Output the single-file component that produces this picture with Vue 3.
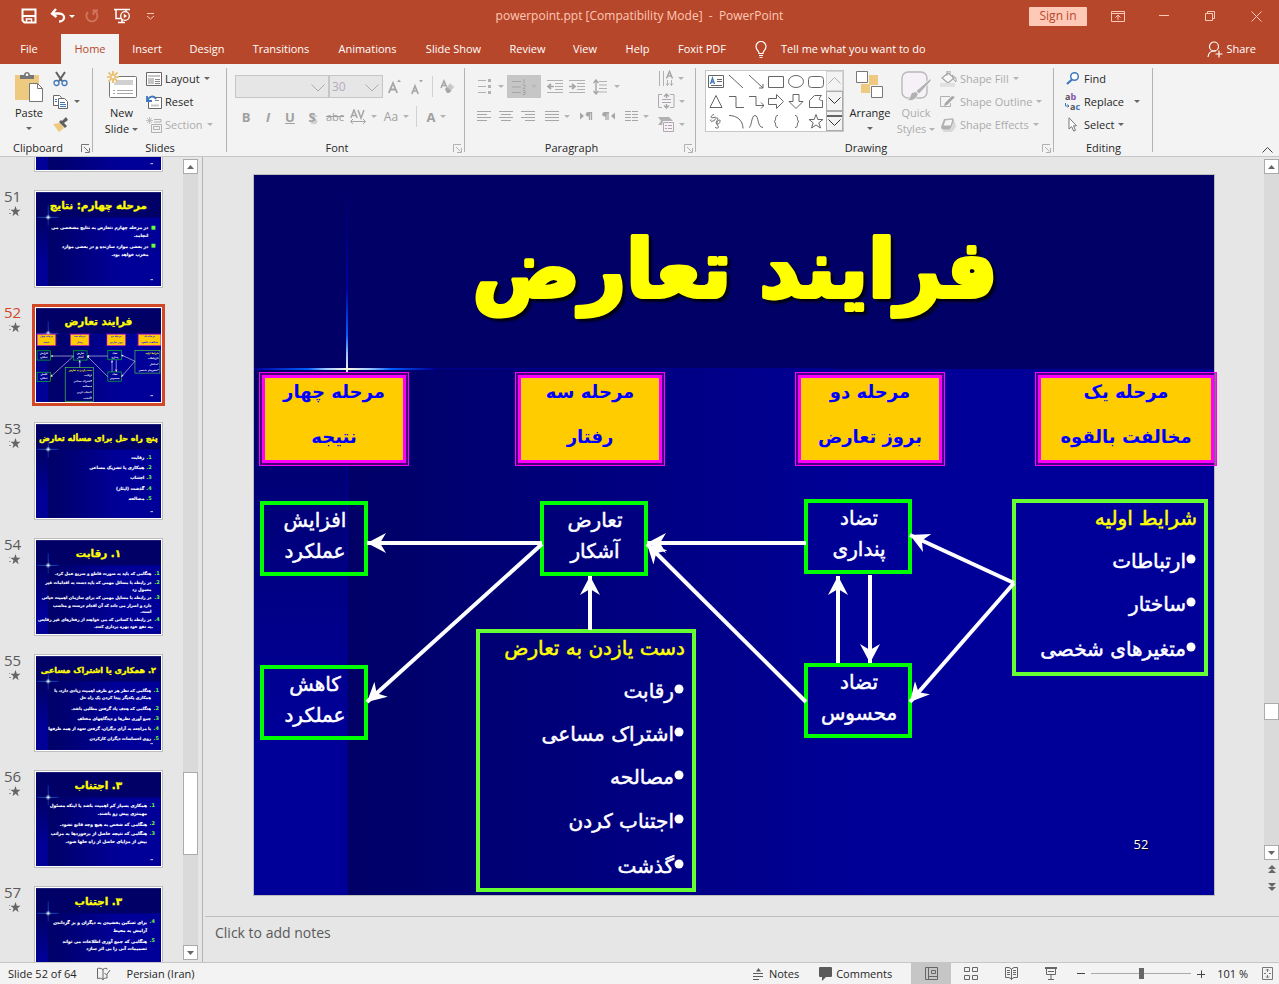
<script setup>
import { h, ref } from 'vue'

const ICONS = {
  save: [16, 16, '<path d="M1.500 1.500h13v13h-11l-2-2z" fill="none" stroke="#fff" stroke-width="2"/><path d="M2 8h12" stroke="#fff" stroke-width="2"/><path d="M5.500 15v-4h5v4" fill="none" stroke="#fff" stroke-width="1.500"/>'],
  undo: [16, 16, '<path d="M6 1 2 5.500 6.500 9M2.500 5.500H9c7 0 6.500 8 0 8" fill="none" stroke="#fff" stroke-width="2.300"/>'],
  redo: [16, 16, '<path d="M4 4a5.500 5.500 0 1 0 5-1.500M9.500 7V2.500H14" fill="none" stroke="#d0765f" stroke-width="1.800"/>'],
  present: [18, 16, '<path d="M1 1.500h16M3 2v8.500h5M9 11v3M5 14.500h7M13 2v2" fill="none" stroke="#fff" stroke-width="1.500"/><circle cx="12" cy="8" r="4.300" fill="#b7472a" stroke="#fff" stroke-width="1.300"/><path d="m10.800 5.800 3.200 2.200-3.200 2.200z" fill="#fff"/>'],
  customize: [9, 8, '<path d="M1 1.500h7" stroke="#ffc9b8"/><path d="m1 4 3.500 3L8 4" fill="none" stroke="#ffc9b8"/>'],
  ribbonopt: [14, 11, '<path d="M.500.500h13v10H.500zM.500 2.500h13M7 9V4.500M4.500 6.500 7 4l2.500 2.500" fill="none" stroke="#ffc9b8"/>'],
  min: [11, 11, '<path d="M0 4.500h10" stroke="#ffc9b8"/>'],
  max: [11, 11, '<path d="M.500 2.500h7v7H.500zM2.500 2.500v-2h7v7h-2" fill="none" stroke="#ffc9b8"/>'],
  close: [11, 11, '<path d="m.500.500 10 10m0-10-10 10" stroke="#ffc9b8"/>'],
  bulb: [12, 17, '<path d="M4 12.500C4 9.500 1 9 1 5.500a5 5 0 0 1 10 0C11 9 8 9.500 8 12.500zM4 14.500h4M4.500 16.500h3" fill="none" stroke="#fff" stroke-width="1.200"/>'],
  share: [16, 17, '<circle cx="7" cy="5.500" r="4.500" fill="none" stroke="#fff" stroke-width="1.200"/><path d="M1 16c.500-4 2-6 6-6h2M12 9.500v7M8.500 13h7" fill="none" stroke="#fff" stroke-width="1.200"/>'],
  paste: [30, 32, '<path d="M1 4h24v25H1z" fill="#eec980"/><path d="M6 8V4h4c0-4 6-4 6 0h4v4z" fill="#777"/><circle cx="13" cy="3.800" r="1.300" fill="#fff"/><path d="M15.500 12.500h8l5 5v13h-13z" fill="#fff" stroke="#777"/><path d="M23.500 12.500v5h5" fill="none" stroke="#777"/>'],
  cut: [15, 16, '<path d="m3 1 6 9M12 1 6 10" stroke="#5f5f5f" stroke-width="2"/><circle cx="3.500" cy="12" r="2.500" fill="none" stroke="#3f78bd" stroke-width="1.300"/><circle cx="11.500" cy="12" r="2.500" fill="none" stroke="#3f78bd" stroke-width="1.300"/>'],
  copy: [15, 14, '<path d="M.500.500h6l2 2v8h-8z" fill="#fff" stroke="#666"/><path d="M5.500 3.500h6l3 3v7h-9z" fill="#fff" stroke="#666"/><path d="M2 4.500h2M2 6.500h2M7 7.500h5M7 9.500h6M7 11.500h6" stroke="#3f78bd"/>'],
  painter: [16, 15, '<path d="m0 7 7-1 4 5-5 4z" fill="#eec980"/><path d="m6 5 6 6 2-2-3-3 4-3-2-3-4 4-1-1z" fill="#5f5f5f"/>'],
  newslide: [31, 28, '<rect x="3.500" y="5.500" width="27" height="21" rx="1" fill="#fff" stroke="#777"/><path d="M8 9h19v5H8z" fill="#d0d0d0"/><path d="M7 19.500h2m2 0h16M7 22.500h2m2 0h16" stroke="#a6a6a6"/><circle cx="7" cy="6" r="6" fill="#f3f3f3"/><path d="M7 0v12M1 6h12M2.500 1.500l9 9m0-9-9 9" stroke="#eab95d" stroke-width="1.700"/><circle cx="7" cy="6" r="2" fill="#fff" stroke="#eab95d"/>'],
  layout: [16, 14, '<path d="M.500.500h15v13H.500z" fill="#fff" stroke="#666"/><path d="M2 3h12v2H2zM2 6h6v6H2z" fill="#c6c6c6"/><path d="M9 7.500h5M9 9.500h5M9 11.500h5" stroke="#888"/>'],
  reset: [16, 14, '<path d="M8 2.500h7.500v11h-13V7" fill="#fff" stroke="#666"/><path d="M5 9.500h8v2H5z" fill="#c6c6c6"/><path d="M9 5.500h4" stroke="#888"/><path d="M1 1v5h5M1.500 5.500C3 1 8 0 10 4" fill="none" stroke="#3f78bd" stroke-width="1.800"/>'],
  section: [16, 16, '<path d="M8 2.500h7v2.500H8" fill="none" stroke="#b1b1b1"/><path d="M5.500 7.500h10v8h-10z" fill="none" stroke="#b1b1b1"/><path d="M7.500 9.500h6v3h-6z" fill="none" stroke="#b1b1b1"/><path d="M3.500 0v7M0 3.500h7M1 1l5 5m0-5-5 5" stroke="#c0c0c0"/>'],
  launch: [9, 9, '<path d="M8 .500H.500V8M3 3l4.500 4.500M8.500 4v4.500H4" fill="none" stroke="#777"/>'],
  launchoff: [9, 9, '<path d="M8 .500H.500V8M3 3l4.500 4.500M8.500 4v4.500H4" fill="none" stroke="#b1b1b1"/>'],
  chev: [14, 8, '<path d="m.500.500 6.500 6.500 6.500-6.500" fill="none" stroke="#ababab"/>'],
  grow: [14, 16, '<path d="m.800 14 4.200-10 4.200 10M2.500 10.500h5" fill="none" stroke="#a6a6a6" stroke-width="1.800"/><path d="m9 3 2-2.500L13 3z" fill="#a6a6a6"/>'],
  shrink: [13, 16, '<path d="m.800 15 3.200-8 3.200 8M2 12h4" fill="none" stroke="#a6a6a6" stroke-width="1.700"/><path d="m8 1 2 2.500L12 1z" fill="#a6a6a6"/>'],
  eraser: [15, 15, '<path d="m1 9 3-7 3 7M2 6.500h4" fill="none" stroke="#a6a6a6" stroke-width="1.600"/><path d="m5 10 5-6 4.500 4L9 14H7z" fill="#c8c8c8" stroke="#f3f3f3" stroke-width=".6"/><path d="m5 10 2-2 4.500 4L9 14H7z" fill="#a6a6a6"/>'],
  av: [16, 15, '<path d="m.800 9 3.200-8 3.200 8M2 6.500h4M8 1l3 8 3-8" fill="none" stroke="#a6a6a6" stroke-width="1.500"/><path d="M1 12.500h14M3 10 .500 12.500 3 15M13 10l2.500 2.500L13 15" fill="none" stroke="#a6a6a6"/>'],
  bullets: [14, 15, '<path d="M0 1.500h8M0 7.500h8M0 13.500h8" stroke="#b1b1b1"/><path d="M10 0h3v3h-3zM10 6h3v3h-3zM10 12h3v3h-3z" fill="#b1b1b1"/>'],
  numbers: [16, 16, '<path d="M0 2.500h9M0 8h9M0 13.500h9" stroke="#a6a6a6"/><path d="M12 .500v4M11 1h1M10.500 6h2.500v1.500L11 9.500h2.500M10.500 11.500H13v4h-2.500M11 13.500h2" fill="none" stroke="#a6a6a6"/>'],
  dedent: [17, 13, '<path d="M0 .500h16M8 3.500h8M8 6.500h8M8 9.500h8M0 12.500h16" stroke="#b1b1b1"/><path d="M1 6.500h6M4 4 1 6.500 4 9" fill="none" stroke="#a6a6a6" stroke-width="1.700"/>'],
  indent: [17, 13, '<path d="M0 .500h16M8 3.500h8M8 6.500h8M8 9.500h8M0 12.500h16" stroke="#b1b1b1"/><path d="M0 6.500h6M3 4l3 2.500L3 9" fill="none" stroke="#a6a6a6" stroke-width="1.700"/>'],
  spacing: [15, 16, '<path d="M6 2.500h8M6 6h8M6 9.500h8M6 13h8" stroke="#b1b1b1"/><path d="M3 1v14M.500 4 3 1l2.500 3M.500 12 3 15l2.500-3" fill="none" stroke="#a6a6a6" stroke-width="1.400"/>'],
  aleft: [14, 11, '<path d="M0 .500h14M0 3.500h10M0 6.500h14M0 9.500h10" stroke="#a6a6a6"/>'],
  acenter: [14, 11, '<path d="M0 .500h14M2 3.500h10M0 6.500h14M2 9.500h10" stroke="#a6a6a6"/>'],
  aright: [14, 11, '<path d="M0 .500h14M4 3.500h10M0 6.500h14M4 9.500h10" stroke="#a6a6a6"/>'],
  ajust: [14, 11, '<path d="M0 .500h14M0 3.500h14M0 6.500h14M0 9.500h14" stroke="#a6a6a6"/>'],
  ltr: [13, 9, '<path d="m0 .500 4 3.500-4 3.500z" fill="#a6a6a6"/><path d="M12 .500H8M9.500 0v8M11.500 0v8" stroke="#a6a6a6" stroke-width="1.300"/><circle cx="8" cy="2.300" r="2.200" fill="#a6a6a6"/>'],
  rtl: [13, 9, '<path d="M13 .500 9 4l4 3.500z" fill="#a6a6a6"/><path d="M7 .500H3M4 0v8M6 0v8" stroke="#a6a6a6" stroke-width="1.300"/><circle cx="2.500" cy="2.300" r="2.200" fill="#a6a6a6"/>'],
  columns: [13, 11, '<path d="M0 .500h6M0 3.500h6M0 6.500h6M0 9.500h6M7 .500h6M7 3.500h6M7 6.500h6M7 9.500h6" stroke="#a6a6a6"/>'],
  textdir: [16, 17, '<path d="M1.500 1v15M5.500 1v15M9.500 10v6M13.500 10v6M8 13.500l1.500 2 1.500-2M12 13.500l1.500 2 1.500-2" fill="none" stroke="#b1b1b1"/><path d="m8.500 8.500 3-7 3 7M9.500 6h4" fill="none" stroke="#a6a6a6" stroke-width="1.500"/>'],
  aligntext: [17, 17, '<path d="M4 1.500H.500v13H4M12 1.500h4v13h-4M4 6.500h9M4 9.500h9" fill="none" stroke="#b1a8b1"/><path d="M8.500 1v4M8.500 11v4M6 3.500 8.500 1 11 3.500M6 12.500 8.500 15l2.500-2.500" fill="none" stroke="#a6a6a6" stroke-width="1.400"/>'],
  smartart: [17, 17, '<path d="M0 1h11l4 4H5l-1 4H0l3-4z" fill="#b1b1b1"/><path d="M5.500 6.500h10v9h-10z" fill="#f8f0f6" stroke="#b1a8b1"/><path d="M7 9.500h2m1 0h4M7 12.500h2m1 0h4" stroke="#a6a6a6"/>'],
  arrange: [28, 28, '<path d="M13 4h9v10h-9zM5 13h9v9H5z" fill="#eec980"/><path d="M.500.500h11v11H.500zM15.500 15.500h11v11h-11z" fill="#fff" stroke="#777"/>'],
  quick: [30, 30, '<rect x="1" y="1" width="25" height="26" rx="6" fill="#f6f1f6" stroke="#b9b9b9" stroke-width="1.400"/><path d="M6 29c4-1 2-7 7-8s5 3 2 6-6 3-9 2z" fill="#b1b1b1" stroke="#f3f3f3"/><path d="m15 20 3 3 12-13V7z" fill="#b1b1b1" stroke="#f3f3f3"/>'],
  fill: [17, 16, '<path d="m2 7 6-5 6 5-6 5z" fill="#f9f9f9" stroke="#a6a6a6" stroke-width="1.200"/><path d="M7 5V0h3v4M12 4l4 3v4l-2-2z" fill="none" stroke="#a6a6a6"/><path d="M0 12h15v4H0z" fill="#e2dfe2"/>'],
  outline: [17, 13, '<path d="M10 1.500H.500v10h10V8" fill="none" stroke="#b1b1b1"/><path d="m5 8 7-7 3 1-8 8-3 1z" fill="#a6a6a6"/>'],
  effects: [17, 14, '<path d="M5 4h10l1 5-4 5H3z" fill="#d9d9d9"/><path d="m4 1 9-.5 1 2-3 7-2 2H2L1 9z" fill="#b1b1b1"/><path d="m5 2 8-1-2 7H3z" fill="#f5f5f5" stroke="#b1b1b1"/>'],
  find: [14, 13, '<circle cx="8.500" cy="4.500" r="3.800" fill="#fff" stroke="#3f78bd" stroke-width="1.500"/><path d="m6 7.500-5 4.500" stroke="#3f78bd" stroke-width="2.200"/>'],
  replace: [16, 20, '<text y="8" font-size="9" font-weight="700" fill="#555">a<tspan fill="#8a4fb0">b</tspan></text><text x="5" y="18" font-size="9" font-weight="700" fill="#555">a<tspan fill="#3f78bd">c</tspan></text><path d="M.500 11v3h3M2.500 12.500 4 14l-1.500 1.500" fill="none" stroke="#3f78bd"/>'],
  cursor: [10, 15, '<path d="m1 .800 7.500 8H5.500l2 4.500-1.800.800-2-4.500L1 12z" fill="#fff" stroke="#777"/>'],
  collapse: [11, 6, '<path d="M.500 5.500 5.500.500l5 5" fill="none" stroke="#444"/>'],
  spell: [15, 14, '<path d="M7 2v11M7 2.500C5 1 3 1 1.500 1.500v10c2-.5 4-.5 5.500 1 1.500-1.500 2-1.500 4-1.500V8M7 2.500C8 1.500 9 1 11 1.500v1" fill="none" stroke="#666"/><path d="m8.500 6 2 2L14 3" fill="none" stroke="#666"/>'],
  notes: [11, 12, '<path d="M3 3.500 5.500 0 8 3.500z" fill="#5a5a5a"/><path d="M0 5.500h10M0 8.500h10M0 11.500h6" stroke="#5a5a5a"/>'],
  comment: [14, 14, '<path d="M1 0h11q1 0 1 1v8q0 1-1 1H7l-4 4v-4H1q-1 0-1-1V1q0-1 1-1z" fill="#5a5a5a"/>'],
  normal: [13, 13, '<path d="M.500.500h12v12H.500zM3.500.500v12M3.500 9.500h9M6.500 3.500h4v3h-4z" fill="none" stroke="#666"/>'],
  sorter: [14, 13, '<path d="M.500.500h5v4h-5zM8.500.500h5v4h-5zM.500 8.500h5v4h-5zM8.500 8.500h5v4h-5z" fill="none" stroke="#666"/>'],
  reading: [13, 13, '<path d="M6.500 2v11M.500.500H4l2.500 1.500L9 .500h3.500v10H9l-2.500 1.500L4 10.500H.500zM2 3.500h3M2 5.500h3M2 7.500h3M8 3.500h3M8 5.500h3M8 7.500h3" fill="none" stroke="#666"/>'],
  show: [12, 13, '<path d="M0 1h12" stroke="#666" stroke-width="2"/><path d="M1.500 2v5.500h9V2M3 4.500h6M6 8v4M3 12.500h6" fill="none" stroke="#666"/>'],
  minus: [8, 8, '<path d="M0 3.500h8" stroke="#444"/>'],
  plus: [9, 8, '<path d="M0 4.500h8M4.500 .500v8" stroke="#444"/>'],
  fit: [12, 13, '<path d="M.500.500h10v12H.500z" fill="none" stroke="#777"/><path d="M5.500 2v3M4 3.500 5.500 2 7 3.500M5.500 11V8M4 9.500 5.500 11 7 9.500M2 6.500h2M9 6.500H7" fill="none" stroke="#777"/>'],
  up: [7, 4, '<path d="m0 4 3.500-4L7 4z" fill="#666"/>'],
  down: [7, 4, '<path d="m0 0 3.500 4L7 0z" fill="#666"/>'],
  pageup: [8, 8, '<path d="M0 4 4 0l4 4zM0 8l4-4 4 4z" fill="#666"/>'],
  pagedown: [8, 8, '<path d="m0 0 4 4 4-4zM0 4l4 4 4-4z" fill="#666"/>'],
  star: [12, 11, '<path d="m6.500 0 1.300 3.800h3.700L8.500 6.200l1.100 4-3.100-2.400-3 2.400 1-4L1.500 3.800h3.600z" fill="#666"/><path d="M0 3.500h1M0 7.500h2" stroke="#999"/>'],
  galup: [13, 8, '<path d="m.500 6.500 6-6 6 6" fill="none" stroke="#b1b1b1"/>'],
  galdown: [13, 8, '<path d="m.500.500 6 6 6-6" fill="none" stroke="#333"/>'],
  galmore: [15, 12, '<path d="M0 1h15" stroke="#333" stroke-width="1.500"/><path d="m1.500 4.500 6 6 6-6" fill="none" stroke="#333"/>'],
}
const Ico = (p) => {
  const [w, hh, body] = ICONS[p.n]
  return h('svg', { width: w, height: hh, viewBox: `0 0 ${w} ${hh}`, 'aria-hidden': 'true', innerHTML: body })
}
Ico.props = ['n']

const tabs = [
  ['File', 't-file'], ['Home', 't-home'], ['Insert', 't-insert'], ['Design', 't-design'], ['Transitions', 't-trans'],
  ['Animations', 't-anim'], ['Slide Show', 't-show'], ['Review', 't-review'], ['View', 't-view'], ['Help', 't-help'], ['Foxit PDF', 't-foxit'],
]

const shapes = [
  ['Text box', '<path d="M.500 2.500h15v12H.500z" fill="#fff"/><path d="m2.500 11 2-6 2 6M3 9h3" stroke="#3f78bd" stroke-width="1.300"/><path d="M9 6.500h5M9 8.500h5M3 12.500h11"/>'],
  ['Line', '<path d="m1 2 14 13"/>'],
  ['Arrow', '<path d="m1 2 14 13M15 11v4h-4"/>'],
  ['Rectangle', '<path d="M.500 3.500h15v11H.500z"/>'],
  ['Oval', '<ellipse cx="8" cy="8.500" rx="7.500" ry="6"/>'],
  ['Rounded rectangle', '<rect x=".5" y="3.500" width="15" height="11" rx="3"/>'],
  ['Triangle', '<path d="M8 2.500 14 14.500H2z"/>'],
  ['Elbow', '<path d="M1 3.500h7v11h8"/>'],
  ['Elbow arrow', '<path d="M1 3.500h7v9h8M13 9.500l3 3-3 3"/>'],
  ['Right arrow', '<path d="M.500 5.500h8v-4l7 7-7 7v-4h-8z"/>'],
  ['Down arrow', '<path d="M5 1.500h6v7h4l-7 7-7-7h4z"/>'],
  ['Freeform', '<path d="M1.500 14.500v-7l5-5h7c-4 4-2 5 1 5v7z"/>'],
  ['Scribble', '<path d="M6 1.500c-5 2-3 4 0 3s3 1 0 3-4 0-3-1M9 5c3 0-3 5 0 6s4-5 2-4-3 4-1 6-2 3-3 1"/>'],
  ['Arc', '<path d="M1 2.500c8 0 14 5 14 13"/>'],
  ['Curve', '<path d="M1 14.500C4 14 3 2.500 7 2.500s2 12 8 12"/>'],
  ['Left brace', '<path d="M10 2.500c-4 0-1 5-4 6 3 1 0 6 4 6"/>'],
  ['Right brace', '<path d="M7 2.500c4 0 1 5 4 6-3 1 0 6-4 6"/>'],
  ['Star', '<path d="m8 1.500 1.800 5h5.200l-4.200 3.300 1.700 5.200L8 12l-4.500 3 1.700-5.200L1 6.500h5.200z"/>'],
]

const phases = [
  { x: 5, w: 150, a: 'مرحله چهار', b: 'نتیجه' },
  { x: 261, w: 150, a: 'مرحله سه', b: 'رفتار' },
  { x: 541, w: 150, a: 'مرحله دو', b: 'بروز تعارض' },
  { x: 781, w: 182, a: 'مرحله یک', b: 'مخالفت بالقوه' },
]
const nodes = [
  { x: 6, y: 326, a: 'افزایش', b: 'عملکرد' },
  { x: 6, y: 490, a: 'کاهش', b: 'عملکرد' },
  { x: 286, y: 326, a: 'تعارض', b: 'آشکار' },
  { x: 550, y: 324, a: 'تضاد', b: 'پنداری' },
  { x: 550, y: 488, a: 'تضاد', b: 'محسوس' },
]
const lists = [
  { x: 758, y: 324, w: 196, h: 177, head: 'شرایط اولیه', items: [['ارتباطات', 393], ['ساختار', 436], ['متغیرهای شخصی', 481]] },
  { x: 222, y: 454, w: 220, h: 263, head: 'دست یازدن به تعارض', items: [['رقابت', 523], ['اشتراک مساعی', 566], ['مصالحه', 609], ['اجتناب کردن', 653], ['گذشت', 698]] },
]
const arrows = [
  'M288 368H113', 'M288 369 113 527', 'M552 368H393', 'M552 527 393 369', 'M336 455V401',
  'M584 488V401', 'M616 400V488', 'M760 408 656 360', 'M760 408 656 527',
]

/* Thumbnail lines: [right edge, baseline, text]; marks: [x, baseline, label] */
const thumbs = [
  { n: 50, title: '', lines: [], marks: [] },
  { n: 51, title: 'مرحله چهارم: نتایج', lines: [[337, 112, 'در مرحله چهارم ،تعارض به نتایج مشخصی می'], [337, 134, 'انجامد.'], [337, 167, 'در بعضی موارد سازنده و در بعضی موارد'], [337, 192, 'مخرب خواهد بود.']], marks: [[359, 110, '■'], [359, 166, '■']] },
  { n: 52, title: 'فرایند تعارض', main: true },
  { n: 53, title: 'پنج راه حل برای مسأله تعارض', long: true, lines: [[325, 104, 'رقابت'], [325, 136, 'همکاری یا تشریک مساعی'], [325, 166, 'اجتناب'], [325, 198, 'گذشت (ایثار)'], [325, 227, 'مصالحه']], marks: [[347, 104, '1.'], [347, 136, '2.'], [347, 166, '3.'], [347, 198, '4.'], [347, 227, '5.']] },
  { n: 54, title: '۱. رقابت', dense: true, lines: [[346, 106, 'هنگامی که باید به صورت قاطع و سریع عمل کرد.'], [346, 131, 'در رابطه با مسائل مهمی که باید دست به اقدامات غیر'], [346, 154, 'معمول زد'], [346, 176, 'در رابطه با مسایل مهمی که برای سازمان اهمیت حیاتی'], [346, 200, 'دارد و اصرار می داند که آن اقدام درست و مناسب'], [346, 219, 'است.'], [346, 242, 'در رابطه با کسانی که می خواهند از رفتارهای غیر رقابتی'], [346, 264, 'به نفع خود بهره برداری کنند.']], marks: [[371, 106, '1.'], [371, 131, '2.'], [371, 176, '3.'], [371, 242, '4.']] },
  { n: 55, title: '۲. همکاری یا اشتراک مساعی', long: true, dense: true, lines: [[345, 107, 'هنگامی که نظر هر دو طرف اهمیت زیادی دارد، با'], [345, 130, 'همکاری یکدیگر پیدا کردن یک راه حل'], [345, 163, 'هنگامی که هدف یاد گرفتن مطلبی باشد.'], [345, 192, 'جمع آوری نظرها و دیدگاههای مختلف'], [345, 221, 'با مراجعه به آرای دیگران، گرفتن تعهد از همه طرفها'], [345, 253, 'روی احساسات دیگران کارکردن']], marks: [[369, 107, '1.'], [369, 163, '2.'], [369, 192, '3.'], [369, 221, '4.'], [369, 253, '5.']] },
  { n: 56, title: '۳. اجتناب', lines: [[333, 106, 'همکاری بسیار کم اهمیت باشد یا اینکه مسئول'], [333, 130, 'مهمتری پیش رو باشند.'], [333, 161, 'هنگامی که شخص به هیچ وجه قانع نشود.'], [333, 190, 'هنگامی که نتیجه حاصل از برخوردها به مراتب'], [333, 214, 'بیش از مزایای حاصل از راه حلها شود.']], marks: [[357, 104, '1.'], [357, 160, '2.'], [357, 189, '3.']] },
  { n: 57, title: '۳. اجتناب', lines: [[333, 107, 'برای تسکین بخشیدن به دیگران و بر گرداندن'], [333, 131, 'آرامش به محیط'], [333, 164, 'هنگامی که جمع آوری اطلاعات می تواند'], [333, 185, 'تصمیمات آنی را بی اثر سازد']], marks: [[357, 105, '4.'], [357, 162, '5.']] },
]
const zoom = ref(50)
</script>

<template>
  <div class="app">
    <svg class="defs" width="0" height="0" aria-hidden="true">
      <defs>
        <linearGradient id="gLeft" x1="0" y1="0" x2="0" y2="1"><stop offset="0" stop-color="#000066" /><stop offset=".7" stop-color="#000099" /></linearGradient>
        <linearGradient id="gRight"><stop offset="0" stop-color="#000066" /><stop offset=".62" stop-color="#000099" /></linearGradient>
        <linearGradient id="gRay" x1="0" y1="0" x2="0" y2="1"><stop offset="0" stop-color="#000066" /><stop offset=".55" stop-color="#0000a0" /><stop offset=".8" stop-color="#0060ff" /><stop offset=".9" stop-color="#9cc8ff" /><stop offset="1" stop-color="#fffbe0" /></linearGradient>
        <linearGradient id="gFlare"><stop offset="0" stop-color="#000099" /><stop offset=".3" stop-color="#0060ff" /><stop offset=".4" stop-color="#9cc8ff" /><stop offset=".52" stop-color="#fffbe0" /><stop offset=".64" stop-color="#9cc8ff" /><stop offset=".76" stop-color="#0060ff" /><stop offset="1" stop-color="#000099" /></linearGradient>
        <radialGradient id="gGlow"><stop offset="0" stop-color="#fff" /><stop offset=".4" stop-color="#fff" stop-opacity=".5" /><stop offset="1" stop-color="#6cf" stop-opacity="0" /></radialGradient>
        <marker id="head" markerUnits="userSpaceOnUse" markerWidth="20" markerHeight="20" refX="19" refY="10" orient="auto"><path d="M0 0 19 10 0 20 6 10z" fill="#fff" /></marker>
        <symbol id="backdrop" viewBox="0 0 960 720">
          <rect width="960" height="720" fill="#000066" />
          <rect y="194" width="92" height="526" fill="url(#gLeft)" />
          <rect x="94" y="194" width="866" height="526" fill="url(#gRight)" />
          <rect x="92" y="194" width="2" height="526" fill="#00008c" />
          <rect x="92" y="10" width="2" height="188" fill="url(#gRay)" />
          <rect y="193" width="180" height="2" fill="url(#gFlare)" />
          <rect x="180" y="193" width="400" height="1" fill="#000090" />
        </symbol>
        <symbol id="diagram" viewBox="0 0 960 720" overflow="visible">
          <g v-for="p in phases" :key="p.x">
            <rect :x="p.x + 1.5" y="198.5" :width="p.w - 3" height="91" fill="none" stroke="#800080" stroke-opacity=".6" stroke-width="3" />
            <rect :x="p.x + .5" y="197.5" :width="p.w - 1" height="93" fill="none" stroke="#ff00ff" />
            <rect :x="p.x + 4.500" y="201.5" :width="p.w - 9" height="85" fill="#ffcc00" stroke="#ff00ff" stroke-width="3" />
            <text class="phase" :x="p.x + p.w / 2" y="223">{{ p.a }}</text>
            <text class="phase" :x="p.x + p.w / 2" y="268">{{ p.b }}</text>
          </g>
          <g v-for="n in nodes" :key="`${n.x}-${n.y}`">
            <rect :x="n.x + 2" :y="n.y + 2" width="104" height="71" fill="none" stroke="#00ff00" stroke-width="4" />
            <text class="node" :x="n.x + 55" :y="n.y + 26">{{ n.a }}</text>
            <text class="node" :x="n.x + 55" :y="n.y + 57">{{ n.b }}</text>
          </g>
          <g v-for="l in lists" :key="l.x">
            <rect :x="l.x + 2" :y="l.y + 2" :width="l.w - 4" :height="l.h - 4" fill="none" stroke="#66ff33" stroke-width="4" />
            <text class="item head" :x="l.x + l.w - 11" :y="l.y + 26">{{ l.head }}</text>
            <g v-for="i in l.items" :key="i[0]">
              <circle :cx="l.x + l.w - 17" :cy="i[1] - 9" r="4.500" fill="#fff" />
              <text class="item" :x="l.x + l.w - 22" :y="i[1]">{{ i[0] }}</text>
            </g>
          </g>
          <path v-for="a in arrows" :key="a" :d="a" fill="none" stroke="#fff" stroke-width="4" marker-end="url(#head)" />
        </symbol>
      </defs>
    </svg>

    <header class="titlebar">
      <div class="quick">
        <button aria-label="Save"><Ico n="save" /></button>
        <button class="b-undo" aria-label="Undo"><Ico n="undo" /><i class="caret light"></i></button>
        <button aria-label="Redo"><Ico n="redo" /></button>
        <button class="b-show" aria-label="Start From Beginning"><Ico n="present" /></button>
        <button class="b-cust" aria-label="Customize Quick Access Toolbar"><Ico n="customize" /></button>
      </div>
      <h1 class="doc">powerpoint.ppt [Compatibility Mode]&nbsp; -&nbsp; PowerPoint</h1>
      <div class="winbtns">
        <button class="signin">Sign in</button>
        <button aria-label="Ribbon Display Options"><Ico n="ribbonopt" /></button>
        <button aria-label="Minimize"><Ico n="min" /></button>
        <button aria-label="Restore Down"><Ico n="max" /></button>
        <button aria-label="Close"><Ico n="close" /></button>
      </div>
    </header>

    <nav class="tabs">
      <button v-for="t in tabs" :key="t[0]" :class="[t[1], { active: t[0] === 'Home' }]">{{ t[0] }}</button>
      <button class="tell"><Ico n="bulb" />Tell me what you want to do</button>
      <button class="sharebtn"><Ico n="share" />Share</button>
    </nav>

    <section class="ribbon" aria-label="Ribbon">
      <div class="group g-clip">
        <div class="body">
          <button class="big"><span class="pic"><Ico n="paste" /></span>Paste<i class="caret"></i></button>
          <div class="stack">
            <button aria-label="Cut"><Ico n="cut" /></button>
            <button aria-label="Copy"><Ico n="copy" /><i class="caret wide"></i></button>
            <button aria-label="Format Painter"><Ico n="painter" /></button>
          </div>
        </div>
        <div class="cap"><span>Clipboard</span><button aria-label="Clipboard options"><Ico n="launch" /></button></div>
      </div>

      <div class="group g-slides">
        <div class="body">
          <button class="big"><span class="pic"><Ico n="newslide" /></span>New<span class="row">Slide<i class="caret"></i></span></button>
          <div class="stack">
            <button><Ico n="layout" />Layout<i class="caret"></i></button>
            <button><Ico n="reset" />Reset</button>
            <button class="off"><Ico n="section" />Section<i class="caret"></i></button>
          </div>
        </div>
        <div class="cap"><span>Slides</span></div>
      </div>

      <div class="group g-font">
        <div class="body rows">
          <div class="line r1">
            <label class="combo c-face"><select aria-label="Font" disabled><option></option></select><Ico n="chev" /></label>
            <label class="combo c-size"><select aria-label="Font size" disabled><option>30</option></select><Ico n="chev" /></label>
            <button aria-label="Increase Font Size"><Ico n="grow" /></button>
            <button aria-label="Decrease Font Size"><Ico n="shrink" /></button>
            <i class="sep"></i>
            <button aria-label="Clear Formatting"><Ico n="eraser" /></button>
          </div>
          <div class="line r2">
            <button class="glyph"><b>B</b></button>
            <button class="glyph it"><b>I</b></button>
            <button class="glyph un"><b>U</b></button>
            <button class="glyph sh"><b>S</b></button>
            <button class="st">abc</button>
            <button class="drop" aria-label="Character Spacing"><Ico n="av" /><i class="caret"></i></button>
            <button class="drop aa">Aa<i class="caret"></i></button>
            <i class="sep"></i>
            <button class="drop fc"><b>A</b><i class="caret"></i></button>
          </div>
        </div>
        <div class="cap"><span>Font</span><button aria-label="Font options"><Ico n="launchoff" /></button></div>
      </div>

      <div class="group g-para">
        <div class="body">
          <div class="rows">
            <div class="line r1">
              <button class="drop d36" aria-label="Bullets"><Ico n="bullets" /><i class="caret"></i></button>
              <button class="drop numbered" aria-label="Numbering"><Ico n="numbers" /><i class="caret faint"></i></button>
              <button class="w22" aria-label="Decrease List Level"><Ico n="dedent" /></button>
              <button class="w22" aria-label="Increase List Level"><Ico n="indent" /></button>
              <button class="drop d36" aria-label="Line Spacing"><Ico n="spacing" /><i class="caret"></i></button>
            </div>
            <div class="line r2">
              <button class="w22" aria-label="Align Left"><Ico n="aleft" /></button>
              <button class="w22" aria-label="Center"><Ico n="acenter" /></button>
              <button class="w22" aria-label="Align Right"><Ico n="aright" /></button>
              <button class="drop d36" aria-label="Justify"><Ico n="ajust" /><i class="caret"></i></button>
              <button class="w22" aria-label="Left-to-Right"><Ico n="ltr" /></button>
              <button class="w22" aria-label="Right-to-Left"><Ico n="rtl" /></button>
              <button class="drop d36" aria-label="Columns"><Ico n="columns" /><i class="caret"></i></button>
            </div>
          </div>
          <div class="stack off">
            <button aria-label="Text Direction"><Ico n="textdir" /><i class="caret"></i></button>
            <button aria-label="Align Text"><Ico n="aligntext" /><i class="caret"></i></button>
            <button aria-label="Convert to SmartArt"><Ico n="smartart" /><i class="caret"></i></button>
          </div>
        </div>
        <div class="cap"><span>Paragraph</span><button aria-label="Paragraph options"><Ico n="launchoff" /></button></div>
      </div>

      <div class="group g-draw">
        <div class="body">
          <div class="gallery">
            <div class="shapes">
              <button v-for="s in shapes" :key="s[0]" :aria-label="s[0]"><svg width="16" height="17" viewBox="0 0 16 17" fill="none" stroke="#666" v-html="s[1]"></svg></button>
            </div>
            <div class="galnav">
              <button class="dim" aria-label="Previous row"><Ico n="galup" /></button>
              <button aria-label="Next row"><Ico n="galdown" /></button>
              <button aria-label="More"><Ico n="galmore" /></button>
            </div>
          </div>
          <button class="big arr"><span class="pic"><Ico n="arrange" /></span>Arrange<i class="caret"></i></button>
          <button class="big qs off"><span class="pic"><Ico n="quick" /></span>Quick<span class="row">Styles<i class="caret"></i></span></button>
          <div class="stack off">
            <button><Ico n="fill" />Shape Fill<i class="caret"></i></button>
            <button><Ico n="outline" />Shape Outline<i class="caret"></i></button>
            <button><Ico n="effects" />Shape Effects<i class="caret"></i></button>
          </div>
        </div>
        <div class="cap"><span>Drawing</span><button aria-label="Drawing options"><Ico n="launchoff" /></button></div>
      </div>

      <div class="group g-edit">
        <div class="body">
          <div class="stack">
            <button><span class="slot"><Ico n="find" /></span>Find</button>
            <button><span class="slot"><Ico n="replace" /></span>Replace<i class="caret wide"></i></button>
            <button><span class="slot"><Ico n="cursor" /></span>Select<i class="caret"></i></button>
          </div>
        </div>
        <div class="cap"><span>Editing</span></div>
      </div>
      <button class="collapse" aria-label="Collapse the Ribbon"><Ico n="collapse" /></button>
    </section>

    <main class="work">
      <aside class="panel">
        <ol class="thumbs">
          <li v-for="t in thumbs" :key="t.n" :class="{ current: t.main }">
            <div class="num"><span>{{ t.n }}</span><Ico n="star" /></div>
            <svg class="thumb" viewBox="0 0 375 282">
              <use href="#backdrop" width="375" height="282" />
              <path d="M36.500 40v60" stroke="#39f" stroke-width="2" stroke-opacity=".5" />
              <path d="M4 76h64" stroke="#39f" stroke-width="2" stroke-opacity=".5" />
              <circle cx="36.500" cy="76" r="9" fill="url(#gGlow)" />
              <text class="ttl" :class="{ long: t.long }" x="187" y="50">{{ t.title }}</text>
              <use v-if="t.main" href="#diagram" width="375" height="282" />
              <text v-for="l in t.lines" :key="l[2]" class="tline" :class="{ dense: t.dense }" :x="l[0]" :y="l[1]">{{ l[2] }}</text>
              <text v-for="m in t.marks" :key="m[1]" class="tmark" :x="m[0]" :y="m[1]">{{ m[2] }}</text>
              <path d="M343 263h8" stroke="#ccd" stroke-width="3" />
            </svg>
          </li>
        </ol>
        <div class="scroll">
          <button aria-label="Scroll up"><Ico n="up" /></button>
          <div class="track"><i class="s598"></i><i class="knob k83"></i><i class="s90"></i></div>
          <button aria-label="Scroll down"><Ico n="down" /></button>
        </div>
      </aside>

      <section class="editor">
        <div class="upper">
          <div class="stage">
            <svg class="slide" viewBox="0 0 960 720">
              <rect x="-.5" y="-.5" width="961" height="721" fill="none" stroke="#bcbcbc" />
              <use href="#backdrop" width="960" height="720" />
              <text class="big-title" x="481" y="122">فرایند تعارض</text>
              <use href="#diagram" width="960" height="720" />
              <text class="pageno" x="887" y="674">52</text>
            </svg>
          </div>
          <div class="scroll right">
            <button aria-label="Scroll up"><Ico n="up" /></button>
            <div class="track"><i class="s529"></i><i class="knob k17"></i><i class="s125"></i></div>
            <button aria-label="Scroll down"><Ico n="down" /></button>
            <button class="page" aria-label="Previous Slide"><Ico n="pageup" /></button>
            <button class="page" aria-label="Next Slide"><Ico n="pagedown" /></button>
          </div>
        </div>
        <div class="notes">Click to add notes</div>
      </section>
    </main>

    <footer class="status">
      <span>Slide 52 of 64</span>
      <button class="spell" aria-label="Proofing"><Ico n="spell" /></button>
      <span class="lang">Persian (Iran)</span>
      <button class="s-notes"><Ico n="notes" />Notes</button>
      <button class="s-com"><Ico n="comment" />Comments</button>
      <button class="view on" aria-label="Normal"><Ico n="normal" /></button>
      <button class="view" aria-label="Slide Sorter"><Ico n="sorter" /></button>
      <button class="view" aria-label="Reading View"><Ico n="reading" /></button>
      <button class="view" aria-label="Slide Show"><Ico n="show" /></button>
      <button class="zb" aria-label="Zoom Out"><Ico n="minus" /></button>
      <input v-model="zoom" type="range" min="0" max="100" aria-label="Zoom" />
      <button class="zb" aria-label="Zoom In"><Ico n="plus" /></button>
      <span class="pct">101 %</span>
      <button aria-label="Fit slide to current window"><Ico n="fit" /></button>
    </footer>
  </div>
</template>

<style>
body { margin: 0; overflow: hidden; }
</style>

<style scoped>
.app { height: 100vh; min-width: 1240px; display: flex; flex-direction: column; background: #e6e6e6; color: #262626; font: 11px/16px "Open Sans", "Noto Sans", sans-serif; overflow: hidden; }
.defs { position: absolute; }
button { display: flex; align-items: center; justify-content: center; padding: 0; border: 0; background: none; color: inherit; font: inherit; white-space: nowrap; }
svg { flex: none; display: block; }
.caret { flex: none; border: 3px solid transparent; border-top-color: #666; border-bottom: 0; margin-left: 4px; }
.caret.light { border-top-color: #fff; }

.titlebar { display: grid; grid-template-columns: 1fr auto 1fr; height: 32px; flex: none; background: #b7472a; color: #ffc9b8; }
.quick { display: flex; align-items: center; padding-left: 21px; gap: 9px; }
.b-undo { margin-left: 4px; }
.b-undo .caret { margin-left: 3px; }
.b-show { margin-left: 4px; }
.b-cust { margin-left: 6px; }
.doc { margin: 0; font: inherit; font-size: 12px; line-height: 32px; }
.winbtns { display: flex; align-items: center; justify-content: flex-end; }
.winbtns button { width: 46px; height: 30px; }
.winbtns .signin { width: 58px; height: 19px; margin-right: 8px; border-radius: 1px; background: #ffc9b8; color: #b7472a; font-size: 12px; }

.tabs { display: flex; height: 32px; flex: none; background: #b7472a; color: #fff; }
.tabs button { height: 30px; margin-top: 2px; }
.tabs .active { background: #f3f3f3; color: #b7472a; }
.t-file { width: 58px; margin-right: 3px; }
.t-home { width: 58px; }
.t-insert { width: 56px; }
.t-design { width: 64px; }
.t-trans { width: 84px; }
.t-anim { width: 89px; }
.t-show { width: 83px; }
.t-review { width: 65px; }
.t-view { width: 50px; }
.t-help { width: 55px; }
.t-foxit { width: 74px; }
.tabs .tell { margin-left: 16px; gap: 14px; }
.tabs .sharebtn { margin-left: auto; margin-right: 23px; gap: 3px; }

.ribbon { position: relative; display: flex; height: 92px; flex: none; background: #f3f3f3; border-bottom: 1px solid #c6c6c6; }
.group { position: relative; box-sizing: border-box; padding-top: 3px; display: flex; flex-direction: column; }
.group::after { content: ""; position: absolute; right: 0; top: 4px; bottom: 4px; width: 1px; background: #b4b4b4; }
.body { display: flex; height: 73px; }
.cap { display: flex; justify-content: center; height: 16px; position: relative; }
.cap button { position: absolute; right: 3px; top: 4px; }
.stack { display: flex; flex-direction: column; }
.stack button { height: 23px; justify-content: flex-start; gap: 3px; }
.stack .caret { margin-left: 1px; }
.big { flex-direction: column; justify-content: flex-start; padding-top: 4px; }
.big .caret { margin: 6px 0 0; }
.pic { height: 34px; display: flex; }
.row { display: flex; align-items: center; }
.big .row .caret { margin: 0 0 0 3px; }
.off, .g-font .body, .g-para .body { color: #acacac; }
.off .caret, .g-font .caret, .g-para .caret { border-top-color: #b4b4b4; }
.g-clip { width: 93px; }
.g-clip .body { padding-left: 12px; gap: 7px; }
.g-clip .big { width: 34px; }
.g-clip .cap { padding-right: 17px; }
.stack .caret.wide { margin-left: 3px; }
.g-slides { width: 134px; }
.g-slides .body { padding-left: 9px; gap: 5px; }
.g-slides .big { width: 39px; }
.g-font { width: 238px; }
.g-font .cap, .g-para .cap { padding-right: 18px; }
.rows { display: flex; flex-direction: column; }
.line { display: flex; height: 23px; }
.line .caret { margin-left: 6px; }
.r1 { margin-top: 8px; }
.r2 { margin-top: 7px; }
.g-font .rows { padding-left: 8px; }
.g-font .r2 { padding-right: 4px; }
.combo { position: relative; box-sizing: border-box; height: 23px; border: 1px solid #c6c6c6; background: #e6e6e6; }
.combo select { appearance: none; width: 100%; height: 21px; border: 0; background: none; padding: 0 2px; color: #b5a9bd; font: inherit; font-size: 12px; opacity: 1; }
.combo svg { position: absolute; right: 3px; top: 8px; }
.c-face { width: 94px; }
.c-size { width: 54px; }
.g-font .r1 button { width: 23px; }
.sep { width: 1px; background: #d2d2d2; margin: 1px 3px; }
.r2 .glyph { width: 22px; }
.glyph, .fc { font-size: 13px; }
.g-font .r2 { color: #a0a0a0; }
.it { font-style: italic; }
.un { text-decoration: underline; }
.sh { text-shadow: 2px 2px 1px #c8c8c8; }
.st { width: 24px; text-decoration: line-through; }
.drop { width: 33px; }
.r2 .drop .caret { margin-left: 5px; }
.aa { font-size: 12px; }
.line .caret.faint { margin-left: 3px; border-top-color: #b8b8b8; }
.g-para { width: 231px; }
.g-para .rows { width: 184px; padding-left: 8px; }
.g-para .stack { padding-left: 1px; }
.w22 { width: 22px; }
.drop.d36 { width: 36px; }
.numbered { width: 34px; background: #c6c6c6; margin: 0 3px 0 -2px; }
.g-draw { width: 358px; }
.g-draw .cap { padding-right: 18px; }
.g-draw .body { padding-left: 9px; }
.gallery { display: flex; box-sizing: border-box; height: 62px; margin-top: 3px; border: 1px solid #c6c6c6; background: #fff; }
.shapes { display: grid; grid-template-columns: repeat(6, 20px); grid-auto-rows: 20px; }
.galnav { display: grid; grid-template-rows: repeat(3, 20px); width: 17px; }
.galnav button { border: 1px solid #ababab; background: #f3f3f3; }
.galnav .dim { border-color: #d6d6d6; }
.arr { width: 52px; }
.qs { width: 40px; }
.g-draw .stack { padding-left: 4px; }
.g-edit { width: 99px; }
.g-edit .body { padding-left: 11px; }
.slot { width: 16px; display: flex; justify-content: center; }
.g-edit .caret.wide { margin-left: 7px; }
.collapse { margin: auto 6px 3px auto; }

.work { display: flex; flex: 1; min-height: 0; }
.panel { display: flex; width: 203px; flex: none; border-right: 1px solid #b4b4b4; padding: 2px 0; box-sizing: border-box; overflow: hidden; }
.thumbs { flex: 1; margin: -85px 0 0; padding: 0; list-style: none; display: flex; flex-direction: column; gap: 18px; height: 0; }
.thumbs li { display: flex; height: 98px; flex: none; }
.num { width: 34px; font-size: 15px; line-height: 12px; color: #595959; }
.num span { display: block; padding-left: 4px; margin-bottom: 4px; }
.num svg { margin-left: 9px; }
.thumb { box-sizing: border-box; width: 129px; height: 98px; border: 1px solid #bebebe; padding: 1px; background: #fff; }
.current .num { color: #d24726; }
.current .thumb { border-color: #d24726; outline: 2px solid #d24726; }
.scroll { width: 15px; margin-right: 4px; display: flex; flex-direction: column; background: #dadada; }
.scroll button { box-sizing: border-box; height: 15px; flex: none; border: 1px solid #ababab; background: #fff; }
.track { flex: 1; display: flex; flex-direction: column; }
.knob { background: #fff; box-shadow: inset 0 0 0 1px #ababab; }
.s598 { flex: 598; }
.k83 { flex: 83; }
.s90 { flex: 90; }
.s529 { flex: 529; }
.k17 { flex: 17; }
.s125 { flex: 125; }
.scroll.right { margin: 2px 0 20px; }
.scroll .page { height: 18px; border: 0; background: #e6e6e6; }
.editor { flex: 1; min-width: 0; display: flex; flex-direction: column; margin-left: 2px; }
.upper { flex: 1; display: flex; min-height: 0; }
.stage { flex: 1; min-width: 0; padding: 18px 50px 21px 49px; display: flex; }
.slide { flex: 1; min-width: 0; height: 100%; overflow: visible; }
.notes { box-sizing: border-box; height: 46px; border-top: 1px solid #bebebe; padding: 0 10px; line-height: 32px; font-size: 14px; color: #595959; }

text { direction: rtl; font-family: "DejaVu Sans", sans-serif; }
.big-title { font-size: 80px; font-weight: 700; fill: #ff0; stroke: #ff0; stroke-width: 4px; stroke-linejoin: round; text-anchor: middle; filter: drop-shadow(3px 3px 1px #000018); }
.phase { font-size: 18px; font-weight: 700; fill: #00f; text-anchor: middle; }
.node, .item { font-size: 20px; fill: #fff; stroke: #fff; stroke-width: .5px; }
.node { text-anchor: middle; }
.item.head { fill: #ff0; stroke: #ff0; }
.pageno { font: 13px "Open Sans", sans-serif; fill: #fff; text-anchor: middle; text-shadow: 1px 1px 1px #000; }
.ttl { font-size: 31px; font-weight: 700; fill: #ff0; stroke: #ff0; stroke-width: 1px; text-anchor: middle; }
.ttl.long { font-size: 24px; }
.tline { font-size: 13px; font-weight: 700; fill: #fff; stroke: #fff; stroke-width: .5px; }
.tline.dense { font-size: 12px; }
.tmark { font-size: 15px; font-weight: 700; fill: #6f3; }

.status { display: flex; align-items: center; height: 21px; flex: none; border-top: 1px solid #c6c6c6; background: #f3f3f3; padding: 0 5px 0 8px; }
.spell { margin: 0 16px 0 19px; }
.s-notes { margin-left: auto; gap: 5px; }
.s-com { margin: 0 19px 0 20px; gap: 3px; }
.view { width: 40px; height: 21px; }
.view.on { background: #c6c6c6; }
.zb { width: 12px; margin: 0 4px; }
.status input { appearance: none; width: 100px; height: 12px; margin: 0; background: linear-gradient(#ababab, #ababab) 0 50% / 100% 1px no-repeat; }
.status input::-webkit-slider-thumb { appearance: none; width: 5px; height: 11px; background: #666; }
.pct { margin: 0 14px 0 6px; }
</style>
